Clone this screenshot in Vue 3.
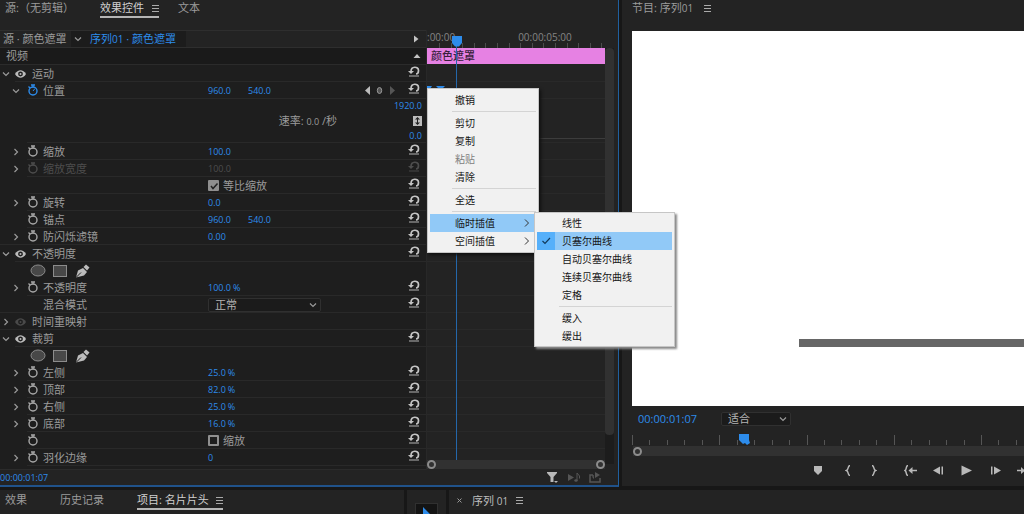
<script setup>
import { ref } from 'vue'

const rows = [
  { kind: 'group', label: '运动', open: true, eye: 'on', reset: true },
  { kind: 'prop', label: '位置', open: true, watch: 'active', values: ['960.0', '540.0'], keys: true, reset: true },
  { kind: 'graph' },
  { kind: 'prop', label: '缩放', open: false, watch: 'on', values: ['100.0'], reset: true },
  { kind: 'prop', label: '缩放宽度', open: false, watch: 'on', values: ['100.0'], reset: true, disabled: true },
  { kind: 'prop', check: '等比缩放', checked: true, reset: true },
  { kind: 'prop', label: '旋转', open: false, watch: 'on', values: ['0.0'], reset: true },
  { kind: 'prop', label: '锚点', watch: 'on', values: ['960.0', '540.0'], reset: true },
  { kind: 'prop', label: '防闪烁滤镜', open: false, watch: 'on', values: ['0.00'], reset: true, line: 'full' },
  { kind: 'group', label: '不透明度', open: true, eye: 'on', reset: true },
  { kind: 'masks', line: 'none' },
  { kind: 'prop', label: '不透明度', open: false, watch: 'on', values: ['100.0'], unit: '%', reset: true },
  { kind: 'prop', label: '混合模式', select: '正常', reset: true, line: 'full' },
  { kind: 'group', label: '时间重映射', open: false, eye: 'off', line: 'full' },
  { kind: 'group', label: '裁剪', open: true, eye: 'on', reset: true },
  { kind: 'masks', line: 'none' },
  { kind: 'prop', label: '左侧', open: false, watch: 'on', values: ['25.0'], unit: '%', reset: true },
  { kind: 'prop', label: '顶部', open: false, watch: 'on', values: ['82.0'], unit: '%', reset: true },
  { kind: 'prop', label: '右侧', open: false, watch: 'on', values: ['25.0'], unit: '%', reset: true },
  { kind: 'prop', label: '底部', open: false, watch: 'on', values: ['16.0'], unit: '%', reset: true },
  { kind: 'prop', watch: 'on', check: '缩放', checked: false, reset: true },
  { kind: 'prop', label: '羽化边缘', open: false, watch: 'on', values: ['0'], reset: true },
]

const menu = [
  { t: '撤销' }, null,
  { t: '剪切' }, { t: '复制' }, { t: '粘贴', disabled: true }, { t: '清除' }, null,
  { t: '全选' }, null,
  { t: '临时插值', sub: true, hot: true }, { t: '空间插值', sub: true },
]
const submenu = [
  { t: '线性' }, { t: '贝塞尔曲线', hot: true, checked: true }, { t: '自动贝塞尔曲线' },
  { t: '连续贝塞尔曲线' }, { t: '定格' }, null, { t: '缓入' }, { t: '缓出' },
]
const fit = ref('适合')
const blend = ref('正常')
const ticks = Array.from({ length: 23 }, (_, i) => ({ x: Math.round(i * 17.45), major: i % 5 === 0 }))
const miniTicks = Array.from({ length: 15 }, (_, i) => Math.round(12 + i * 11.6))
const transport = [
  { name: '添加标记', w: 10, d: 'M1 1h8v5L5 10 1 6z', gap: 0 },
  { name: '标记入点', w: 6, line: 'M5 0.5C2.5 0.5 4 4.5 1.5 5.5 4 6.5 2.5 10.5 5 10.5', gap: 22 },
  { name: '标记出点', w: 6, line: 'M1 0.5C3.5 0.5 2 4.5 4.5 5.5 2 6.5 3.5 10.5 1 10.5', gap: 20 },
  { name: '转到入点', w: 13, line: 'M4 0.5C1.5 0.5 3 4.5 1 5.5 3 6.5 1.5 10.5 4 10.5M7 5.5h6', d: 'M4.5 5.5L8.5 2v7z', gap: 27 },
  { name: '后退一帧', w: 11, d: 'M0 5.5L7 1.5v8zM8.500 1.500h1.500v8h-1.500z', gap: 16 },
  { name: '播放', w: 11, d: 'M0.500 0.500L11 5.500 0.500 10.500z', gap: 17 },
  { name: '前进一帧', w: 11, d: 'M1 1.5h1.500v8H1zM4 1.500L11 5.500 4 9.500z', gap: 18 },
  { name: '转到出点', w: 13, line: 'M0 5.5h5M9 .5C11.500 .5 10 4.500 12 5.500 10 6.500 11.500 10.500 9 10.500', d: 'M8 5.500L4 2v7z', gap: 16 },
]
</script>

<template>
  <div class="app">
    <div class="top">
      <section class="effects">
        <nav class="tabs">
          <button class="tab origin">源:（无剪辑）</button>
          <button class="tab on">效果控件 <i class="burger"></i></button>
          <button class="tab">文本</button>
        </nav>

        <div class="body">
          <div class="list">
            <div class="source">
              <button class="clipname">源 · 颜色遮罩</button>
              <div class="seq">
                <svg width="8" height="6" viewBox="0 0 8 6"><path d="M1 1.500l3 3 3-3" class="st" /></svg>
                <button class="link">序列<span class="dig">01</span> · 颜色遮罩</button>
              </div>
              <svg class="tri" width="6" height="8" viewBox="0 0 6 8"><path d="M1 .5v7L5.500 4z" fill="#c4c4c4" /></svg>
            </div>
            <div class="video">
              <span>视频</span>
              <svg width="8" height="6" viewBox="0 0 8 6"><path d="M.5 5h7L4 1z" fill="#c4c4c4" /></svg>
            </div>

            <div v-for="(r, i) in rows" :key="i" class="row" :class="[r.kind, 'ln-' + (r.line || 'in'), { dim: r.disabled }]">
              <template v-if="r.kind === 'graph'">
                <button class="num">1920.0</button>
                <div class="rate"><span>速率: <span class="small">0.0</span> /秒</span>
                  <svg width="9" height="10" viewBox="0 0 9 10"><rect width="9" height="10" fill="#bdbdbd" /><path d="M4.500 1L7 3.500H2zM4.500 9L2 6.500h5zM4 3h1v4H4z" fill="#222" /></svg>
                </div>
                <button class="num">0.0</button>
              </template>

              <template v-else>
                <div class="name">
                  <span class="tw">
                    <svg v-if="r.open === true" width="8" height="6" viewBox="0 0 8 6"><path d="M1 1.500l3 3 3-3" class="st" /></svg>
                    <svg v-else-if="r.open === false" width="6" height="8" viewBox="0 0 6 8"><path d="M1.500 1l3 3-3 3" class="st" /></svg>
                  </span>
                  <template v-if="r.kind === 'masks'">
                    <svg width="60" height="14" viewBox="0 0 60 14">
                      <ellipse cx="8" cy="6.500" rx="7" ry="5.500" class="shape" />
                      <rect x="23.500" y="1.500" width="13" height="11" class="shape" />
                      <path d="M46 13.500L48 6.500 53 4l4 4-3 3.500z" fill="#bcbcbc" />
                      <path d="M46 13.500l5-5" stroke="#222" stroke-width="1" />
                      <path d="M53.500 3L56 .5l3.500 3L57 6.500z" fill="#bcbcbc" />
                    </svg>
                  </template>
                  <span v-if="r.kind === 'group'" class="eye" :class="r.eye">
                    <svg width="11" height="8" viewBox="0 0 11 8"><path d="M0 4C3-1 8-1 11 4 8 9 3 9 0 4z" fill="currentColor" /><circle cx="5.500" cy="4" r="2.400" fill="#1e1e1e" /><circle cx="5.500" cy="4" r="1" fill="currentColor" /></svg>
                  </span>
                  <span v-if="r.kind === 'prop'" class="watch" :class="r.watch">
                    <svg v-if="r.watch" width="12" height="13" viewBox="0 0 12 13"><circle cx="6" cy="7" r="4" fill="none" stroke="currentColor" stroke-width="1.400" /><path d="M4 1h4M6 1v2.500M1.500 2.500l1.500 1.500" fill="none" stroke="currentColor" stroke-width="1.300" /><path v-if="r.watch === 'active'" d="M6 7l2-2.500" stroke="currentColor" /></svg>
                  </span>
                  <span v-if="r.label" class="lab">{{ r.label }}</span>
                </div>
                <div class="vals">
                  <button v-for="(v, k) in r.values" :key="k" class="num val" :class="{ first: r.values.length > 1 && k === 0 }" :disabled="r.disabled">{{ v }}</button>
                  <span v-if="r.unit" class="num unit">{{ r.unit }}</span>
                  <label v-if="r.check" class="check">
                    <input type="checkbox" :checked="r.checked" />
                    <svg width="12" height="12" viewBox="0 0 12 12"><path d="M3 6l2 2.500L9.500 3.500" fill="none" stroke="#222" stroke-width="1.500" /></svg>
                    {{ r.check }}
                  </label>
                  <div v-if="r.select" class="drop blend">
                    <select v-model="blend" aria-label="混合模式"><option>正常</option></select>
                    <svg width="8" height="6" viewBox="0 0 8 6"><path d="M1 1.500l3 3 3-3" class="st" /></svg>
                  </div>
                </div>
                <div v-if="r.keys" class="keys">
                  <svg width="30" height="9" viewBox="0 0 30 9"><path d="M5 0v9L0 4.500z" fill="#bbb" /><ellipse cx="14.500" cy="4.500" rx="2.200" ry="3" fill="#555" stroke="#999" /><path d="M25 0v9l5-4.500z" fill="#555" /></svg>
                </div>
                <button v-if="r.reset" class="reset" aria-label="重置参数" :disabled="r.disabled">
                  <svg width="12" height="11" viewBox="0 0 12 11"><path d="M3 5.500C3 -.2 10.500.2 10.500 4.500c0 2-1 3.500-2.500 3.500" fill="none" stroke="currentColor" stroke-width="1.700" /><path d="M0 5h6L3 8z" fill="currentColor" /><path d="M1 10h10" stroke="currentColor" stroke-opacity=".6" stroke-width="1.500" /></svg>
                </button>
              </template>
            </div>
            <div class="list-end"></div>
          </div>

          <div class="lanes">
            <div class="ruler">
              <span>:00:00</span><span>00:00:05:00</span>
              <svg class="ticks" width="180" height="5"><path v-for="x in miniTicks" :key="x" :d="`M${x}.5 0v5`" stroke="#4c4c4c" /></svg>
            </div>
            <div class="clip">颜色遮罩</div>
            <div v-for="(r, i) in rows" :key="i" class="lane" :class="[r.kind, 'ln-' + (r.line || 'in')]">
              <svg v-if="r.keys" width="20" height="12" viewBox="0 0 20 12"><path d="M0 0h5L3 3H2v9H0zM9 0h9l-3 3h-3z" fill="#2d8ceb" /></svg>
            </div>
            <div class="hbar"><i></i><i></i></div>
            <div class="playhead"><svg width="10" height="11" viewBox="0 0 10 11"><path d="M0 0h10v7L7 10.500H3L0 7z" fill="#2d8ceb" /></svg></div>
          </div>
          <div class="vbar"><i></i></div>
        </div>

        <footer class="foot">
          <button class="num time">00:00:01:07</button>
          <svg width="56" height="13" viewBox="0 0 56 13">
            <path d="M1 1h10v1L7.500 6v5h-3V6L1 2z" fill="#b8b8b8" /><path d="M8 10h4l-2 2z" fill="#b8b8b8" />
            <path d="M22 3l6 3.500-6 3.500z" fill="#555" /><path d="M31 9.500V2l2.500 3v2.500" fill="none" stroke="#555" /><ellipse cx="30" cy="9.500" rx="1.700" ry="1.300" fill="#555" />
            <path d="M47 4h-3v7h10V7M47 4c0 2 0 3 1 3" fill="none" stroke="#555" stroke-width="1.500" /><path d="M49 1l5 3-5 3z" fill="#555" />
          </svg>
        </footer>
      </section>

      <section class="program">
        <header class="ptitle">节目: 序列<span class="dig">01</span> <i class="burger"></i></header>
        <div class="preview"><div class="bar"></div></div>
        <div class="pinfo">
          <button class="tc">00:00:01:07</button>
          <div class="drop">
            <select v-model="fit" aria-label="缩放级别"><option>适合</option></select>
            <svg width="8" height="6" viewBox="0 0 8 6"><path d="M1 1.500l3 3 3-3" class="st" /></svg>
          </div>
        </div>
        <div class="pruler">
          <svg width="100%" height="12"><path v-for="t in ticks" :key="t.x" :d="`M${t.x}.5 ${t.major ? 1 : 6}V11`" stroke="#555" />
            <path d="M107 0h10v6l1 3-3 2-2-2-2 1-4-4z" fill="#2d8ceb" /></svg>
        </div>
        <div class="pscroll"><i></i></div>
        <div class="transport">
          <button v-for="b in transport" :key="b.name" :aria-label="b.name" :style="{ marginLeft: b.gap + 'px' }">
            <svg :width="b.w" height="11" :viewBox="`0 0 ${b.w} 11`"><path v-if="b.line" :d="b.line" fill="none" stroke="#b8b8b8" stroke-width="1.500" /><path v-if="b.d" :d="b.d" fill="#b8b8b8" /></svg>
          </button>
        </div>
      </section>
    </div>

    <div class="bottom">
      <nav class="project">
        <button class="tab">效果</button>
        <button class="tab">历史记录</button>
        <button class="tab on">项目: 名片片头 <i class="burger"></i></button>
      </nav>
      <div class="tools"><button aria-label="选择工具"><svg width="12" height="14" viewBox="0 0 12 14"><path d="M1 0l10 10H6l-5 4z" fill="#2d8ceb" /></svg></button></div>
      <nav class="timeline">
        <button class="close" aria-label="关闭"><svg width="5" height="5" viewBox="0 0 5 5"><path d="M.5.5l4 4M4.500.5l-4 4" stroke="#999" /></svg></button>
        <span>序列 <span class="dig">01</span></span><i class="burger"></i>
      </nav>
    </div>

    <div class="menu main" role="menu">
      <template v-for="(m, i) in menu" :key="i">
        <hr v-if="!m" />
        <button v-else role="menuitem" :class="{ hot: m.hot }" :disabled="m.disabled">
          <span class="gut"></span>{{ m.t }}
          <svg v-if="m.sub" class="arr" width="6" height="8" viewBox="0 0 6 8"><path d="M1 .5L4.500 4 1 7.500" fill="none" stroke="#333" /></svg>
        </button>
      </template>
    </div>
    <div class="menu sub" role="menu">
      <template v-for="(m, i) in submenu" :key="i">
        <hr v-if="!m" />
        <button v-else role="menuitem" :class="{ hot: m.hot }">
          <span class="gut"><svg v-if="m.checked" width="9" height="8" viewBox="0 0 9 8"><path d="M.5 4L3 6.500l5-5.500" fill="none" stroke="#123a5c" stroke-width="1.200" /></svg></span>{{ m.t }}
        </button>
      </template>
    </div>
  </div>
</template>

<style>
body { background: #171717; overflow: hidden; }
</style>

<style scoped>
* { box-sizing: border-box; }
.app {
  position: relative; display: flex; flex-direction: column; min-height: 100vh; overflow: hidden;
  background: #171717; color: #9b9b9b;
  font: 11px/16px "Open Sans", "Noto Sans CJK SC", sans-serif;
}
button { font: inherit; color: inherit; background: none; border: 0; padding: 0; white-space: nowrap; text-align: left; }
svg { display: block; flex: none; }
.st { fill: none; stroke: #9a9a9a; stroke-width: 1.2; }
.shape { fill: #484848; stroke: #8c8c8c; }
.dig { font-size: 10px; }
.small { font-size: 9px; }
.top { display: grid; grid-template-columns: 619fr 402fr; column-gap: 3px; }

.effects { background: #232323; border-right: 1px solid #20609f; border-bottom: 2px solid #20528a; min-width: 0; }
.tabs { display: flex; gap: 19px; height: 30px; padding-left: 5px; }
.origin { min-width: 76px; }
.tab { display: flex; align-items: center; height: 18px; border-bottom: 2px solid transparent; }
.tab.on { color: #d0d0d0; border-color: #b5b5b5; }
.burger { display: inline-block; width: 7px; height: 7px; margin-left: 8px; border-top: 1px solid #aaa; border-bottom: 1px solid #aaa; background: linear-gradient(#aaa, #aaa) 0 2px / 7px 1px no-repeat; }

.body { display: grid; grid-template-columns: 426fr 179fr 13fr; }
.list { background: #1e1e1e; min-width: 0; }
.source { display: flex; align-items: center; height: 18px; background: #232323; border: solid #2e2e2e; border-width: 1px 0; }
.clipname { width: 71px; padding-left: 3px; }
.seq { display: flex; align-items: center; align-self: stretch; gap: 8px; width: 115px; padding-left: 3px; background: #1c1c1c; }
.link { color: #2d8ceb; }
.tri { margin-left: auto; margin-right: 7px; }
.video { display: flex; align-items: center; justify-content: space-between; height: 17px; padding: 0 5px 0 6px; background: #1a1a1a; border-bottom: 1px solid #2b2b2b; }
.row { position: relative; display: flex; align-items: center; height: 17px; padding-right: 6px; }
.row::after { content: ""; position: absolute; left: 27px; right: 0; bottom: 0; height: 1px; background: #292929; }
.row.group::after { left: 15px; }
.row.ln-full::after { left: 0; }
.row.ln-none::after { display: none; }
.row.graph { flex-direction: column; align-items: flex-end; justify-content: space-between; height: 44px; padding: 0 4px 0 0; }
.rate { display: flex; align-items: center; gap: 76px; height: 16px; }
.name { display: flex; align-items: center; width: 208px; flex: none; }
.tw { display: flex; justify-content: center; width: 12px; flex: none; }
.prop .name { padding-left: 10px; }
.masks .name { padding-left: 18px; }
.eye { width: 17px; margin-left: 3px; color: #bcbcbc; }
.eye.off { color: #4a4a4a; }
.watch { width: 16px; margin-left: 5px; color: #a8a8a8; }
.watch.active { color: #2d8ceb; }
.vals { display: flex; align-items: center; flex: 1; }
.num { font-size: 9px; line-height: 14px; color: #2d8ceb; }
.val { margin-right: 2px; }
.val.first { min-width: 38px; }
.dim .lab, .dim .num, .dim .watch, .dim .reset { color: #4d4d4d; }
.keys { margin-right: 13px; }
.reset { color: #c4c4c4; align-self: flex-start; padding-top: 1px; }
.check { position: relative; display: flex; align-items: center; gap: 4px; }
.check input { appearance: none; width: 11px; height: 11px; margin: 0; border: 2px solid #8f8f8f; border-radius: 1px; }
.check input:checked { background: #8f8f8f; }
.check svg { position: absolute; left: 0; }
.check input:not(:checked) + svg { display: none; }
.drop { position: relative; display: flex; align-items: center; width: 70px; height: 14px; background: #1b1b1b; border: 1px solid #303030; border-radius: 2px; }
.drop.blend { width: 113px; }
.drop select { appearance: none; width: 100%; padding: 0 6px; background: none; border: 0; color: #b5b5b5; font: inherit; line-height: 12px; outline: 0; }
.drop svg { position: absolute; right: 3px; }
.list-end { height: 4px; border-bottom: 1px solid #2b2b2b; }

.lanes { position: relative; min-width: 0; border-left: 1px solid #282828; }
.ruler { position: relative; display: flex; justify-content: flex-start; gap: 63px; height: 18px; font-size: 10px; line-height: 15px; color: #858585; overflow: hidden; }
.ticks { position: absolute; left: 0; bottom: 0; }
.clip { height: 16px; padding-left: 4px; background: #e681e3; color: #38203a; font-weight: 500; line-height: 16px; margin-bottom: 1px; }
.lane { height: 17px; border-bottom: 1px solid #292929; padding-top: 4px; }
.lane.ln-none { border-color: transparent; }
.lane.graph { height: 44px; background: linear-gradient(#3c3c3c, #3c3c3c) 0 39px / 100% 1px no-repeat; }
.hbar { position: absolute; left: 0; right: 0; bottom: 1px; display: flex; justify-content: space-between; align-items: center; height: 9px; background: #313131; }
.hbar i, .pscroll i { width: 9px; height: 9px; border: 2px solid #8c8c8c; border-radius: 50%; }
.playhead { position: absolute; top: 6px; left: 25px; bottom: 10px; width: 10px; background: linear-gradient(#2467ab, #2467ab) 4px 0 / 1px 100% no-repeat; }
.vbar { width: 9px; margin: 18px 0 6px; background: #1c1c1c; }
.vbar i { display: block; height: 93%; background: #313131; border-radius: 4px; }
.foot { display: flex; align-items: center; justify-content: space-between; height: 15px; padding-right: 16px; }

.program { background: #232323; display: flex; flex-direction: column; margin-bottom: 1px; min-width: 0; overflow: hidden; }
.ptitle { height: 31px; padding: 0 10px; }
.preview { position: relative; flex: 1; margin-left: 10px; background: #fff; }
.bar { position: absolute; left: 42.6%; right: 0; top: 82%; height: 8px; background: #666; }
.pinfo { display: flex; align-items: center; gap: 22px; height: 25px; padding-left: 16px; }
.tc { font-size: 11px; color: #2d8ceb; width: 61px; }
.pruler { padding: 3px 0 0 10px; height: 15px; overflow: hidden; }
.pscroll { display: flex; align-items: center; height: 10px; margin-left: 11px; background: #313131; }
.transport { display: flex; align-items: center; height: 30px; padding: 0 0 2px 191px; }

.bottom { display: grid; grid-template-columns: 404fr 39fr 575fr; column-gap: 3px; flex: 1; min-height: 25px; margin-top: 3px; line-height: 16px; }
.bottom > * { background: #232323; min-width: 0; }
.project { display: flex; gap: 33px; padding: 2px 0 0 5px; }
.project .burger { margin-left: 7px; }
.tools { padding: 13px 8px 0; overflow: hidden; height: 25px; }
.tools button { width: 23px; height: 20px; padding: 3px 6px; background: #141414; border: 1px solid #303030; }
.timeline { display: flex; align-items: center; height: 25px; padding: 0 8px 4px; color: #bdbdbd; }
.close { margin-right: 10px; }
.timeline .burger { margin-left: 8px; }

.menu { position: absolute; background: #f1f1f1; border: 1px solid #c6c6c6; padding: 2px; color: #161616; font: 10px/18px "Noto Sans CJK SC", sans-serif; }
.menu button { display: flex; align-items: center; width: 100%; height: 18px; }
.menu button:disabled { color: #808080; }
.menu hr { height: 1px; margin: 2px 0 2px 22px; border: 0; background: #d4d4d4; }
.menu .hot { background: #91c9f7; }
.gut { display: flex; align-items: center; justify-content: center; width: 18px; height: 18px; margin-right: 7px; }
.sub .hot .gut { background: #56b0fa; }
.arr { margin-left: auto; margin-right: 6px; }
.main { left: 427px; top: 88px; width: 112px; box-shadow: 2px 2px 3px #111; }
.sub { left: 534px; top: 212px; width: 141px; padding: 1px 2px; box-shadow: 2px 2px 2px #8a8a8a; }
</style>
